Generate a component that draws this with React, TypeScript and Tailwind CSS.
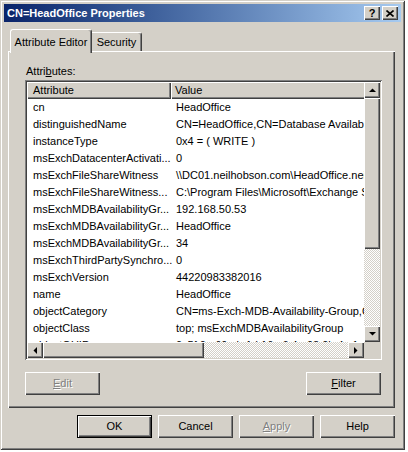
import React from 'react'

// Win2k style 3D edges
const raised = 'shadow-[inset_1px_1px_0_#fff,inset_-1px_-1px_0_#404040,inset_-2px_-2px_0_#808080]'
const dither = 'bg-[repeating-conic-gradient(#fff_0%_25%,#d4d0c8_0%_50%)] bg-[length:2px_2px]'

const ROWS: [string, string][] = [
    ['cn', 'HeadOffice'],
    ['distinguishedName', 'CN=HeadOffice,CN=Database Availability Groups,CN=Exchange Administrative Group'],
    ['instanceType', '0x4 = ( WRITE )'],
    ['msExchDatacenterActivati...', '0'],
    ['msExchFileShareWitness', '\\\\DC01.neilhobson.com\\HeadOffice.neilhobson.com'],
    ['msExchFileShareWitness...', 'C:\\Program Files\\Microsoft\\Exchange Server\\V14\\Witness'],
    ['msExchMDBAvailabilityGr...', '192.168.50.53'],
    ['msExchMDBAvailabilityGr...', 'HeadOffice'],
    ['msExchMDBAvailabilityGr...', '34'],
    ['msExchThirdPartySynchro...', '0'],
    ['msExchVersion', '44220983382016'],
    ['name', 'HeadOffice'],
    ['objectCategory', 'CN=ms-Exch-MDB-Availability-Group,CN=Schema,CN=Configuration'],
    ['objectClass', 'top; msExchMDBAvailabilityGroup'],
    ['objectGUID', '0x5f 0e 69 eb 1d 16 e6 4a 98 0b 4c 1a 2d 9e 33 71'],
]

function Arrow({ dir }: { dir: 'up' | 'down' | 'left' | 'right' }) {
    const pts = {
        up: '0,4 7,4 3.5,0.5',
        down: '0,0 7,0 3.5,3.5',
        left: '4,0 4,7 0.5,3.5',
        right: '0,0 0,7 3.5,3.5',
    }[dir]
    const vertical = dir === 'up' || dir === 'down'
    return (
        <div className={`w-[16px] h-[16px] bg-[#d4d0c8] flex items-center justify-center ${raised}`}>
            <svg width={vertical ? 7 : 4} height={vertical ? 4 : 7} viewBox={vertical ? '0 0 7 4' : '0 0 4 7'}>
                <polygon points={pts} fill="#000" />
            </svg>
        </div>
    )
}

function Btn({ children, disabled, isDefault }: { children: React.ReactNode; disabled?: boolean; isDefault?: boolean }) {
    return (
        <div className={`w-[75px] h-[23px] ${isDefault ? 'border border-black' : ''}`}>
            <div className={`w-full h-full bg-[#d4d0c8] flex items-center justify-center text-[11px] ${raised} ${disabled ? 'text-[#808080] [text-shadow:1px_1px_0_#fff]' : 'text-black'}`}>
                {children}
            </div>
        </div>
    )
}

export default function App() {
    return (
        <div className="w-[408px] h-[452px] bg-white font-['Liberation_Sans',Arial,sans-serif] text-[11px] text-black">
            <div className="w-[405px] h-[450px] bg-[#d4d0c8] p-[4px] flex flex-col shadow-[inset_1px_1px_0_#d4d0c8,inset_-1px_-1px_0_#404040,inset_2px_2px_0_#fff,inset_-2px_-2px_0_#808080]">
                {/* title bar */}
                <div className="h-[18px] flex items-center justify-between pl-[3px] pr-[3px] bg-gradient-to-r from-[#0a246a] to-[#a6caf0]">
                    <span className="text-white font-bold text-[11px] leading-none">CN=HeadOffice Properties</span>
                    <div className="flex gap-[2px]">
                        <div className={`w-[16px] h-[14px] bg-[#d4d0c8] flex items-center justify-center font-bold text-[11px] leading-none ${raised}`}>?</div>
                        <div className={`w-[16px] h-[14px] bg-[#d4d0c8] flex items-center justify-center ${raised}`}>
                            <svg width="8" height="7" viewBox="0 0 8 7">
                                <path d="M0.5 0.5 L7.5 6.5 M7.5 0.5 L0.5 6.5" stroke="#000" strokeWidth="1.6" />
                            </svg>
                        </div>
                    </div>
                </div>

                {/* tabs */}
                <div className="pl-[4px] pr-[6px] pt-[7px]">
                    <div className="flex items-end h-[22px] pl-[2px]">
                        <div className="relative z-10 -mb-[2px] h-[24px] w-[82px] bg-[#d4d0c8] border-t border-l border-white border-r border-r-[#404040] rounded-t-[3px] shadow-[inset_-1px_0_0_#808080] flex items-start justify-center pt-[4px]">
                            Attribute Editor
                        </div>
                        <div className="h-[19px] w-[50px] bg-[#d4d0c8] border-t border-white border-r border-r-[#404040] rounded-tr-[3px] shadow-[inset_-1px_0_0_#808080] flex items-center justify-center">
                            Security
                        </div>
                    </div>

                    {/* panel */}
                    <div className={`h-[357px] bg-[#d4d0c8] flex flex-col pl-[16px] pr-[14px] pt-[12px] border-t border-l border-white shadow-[inset_-1px_-1px_0_#404040,inset_-2px_-2px_0_#808080]`}>
                        <div className="h-[14px] pl-[1px] leading-[14px]">
                            Attri<span className="underline">b</span>utes:
                        </div>
                        {/* list view */}
                        <div className="mt-[2px] w-[357px] h-[280px] p-[2px] bg-white shadow-[inset_1px_1px_0_#808080,inset_-1px_-1px_0_#fff,inset_2px_2px_0_#404040,inset_-2px_-2px_0_#d4d0c8]">
                            <div className="grid grid-cols-[337px_16px] grid-rows-[260px_16px] h-full">
                                <div className="overflow-hidden bg-white">
                                    <div className="flex h-[17px]">
                                        <div className={`w-[144px] shrink-0 bg-[#d4d0c8] pl-[6px] flex items-center ${raised}`}>Attribute</div>
                                        <div className={`w-[400px] shrink-0 bg-[#d4d0c8] pl-[4px] flex items-center ${raised}`}>Value</div>
                                    </div>
                                    {ROWS.map(([attr, val], i) => (
                                        <div key={i} className="flex h-[17px] items-center whitespace-nowrap">
                                            <div className="w-[144px] shrink-0 pl-[6px]">{attr}</div>
                                            <div className="pl-[5px]">{val}</div>
                                        </div>
                                    ))}
                                </div>
                                {/* vertical scrollbar */}
                                <div className={`flex flex-col ${dither}`}>
                                    <Arrow dir="up" />
                                    <div className={`h-[151px] bg-[#d4d0c8] ${raised}`} />
                                    <div className="flex-1" />
                                    <Arrow dir="down" />
                                </div>
                                {/* horizontal scrollbar */}
                                <div className={`flex ${dither}`}>
                                    <Arrow dir="left" />
                                    <div className={`w-[161px] bg-[#d4d0c8] ${raised}`} />
                                    <div className="flex-1" />
                                    <Arrow dir="right" />
                                </div>
                                <div className="bg-[#d4d0c8]" />
                            </div>
                        </div>
                        <div className="mt-[12px] flex justify-between">
                            <Btn disabled><span className="underline">E</span>dit</Btn>
                            <Btn><span className="underline">F</span>ilter</Btn>
                        </div>
                    </div>
                </div>

                {/* dialog buttons */}
                <div className="mt-[7px] pr-[6px] flex justify-end gap-[6px]">
                    <Btn isDefault>OK</Btn>
                    <Btn>Cancel</Btn>
                    <Btn disabled><span className="underline">A</span>pply</Btn>
                    <Btn>Help</Btn>
                </div>
            </div>
        </div>
    )
}
